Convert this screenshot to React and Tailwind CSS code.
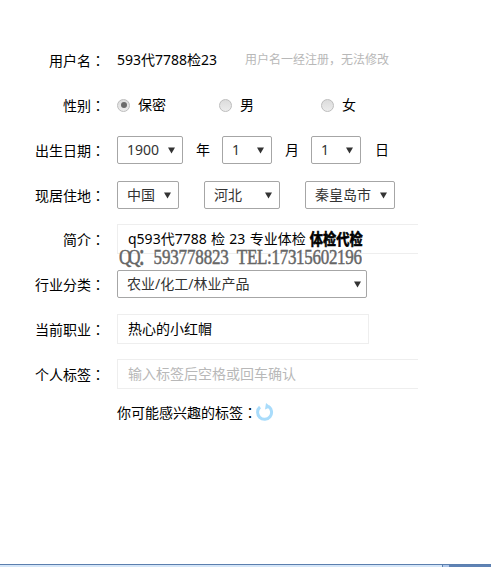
const sans = "font-['Noto_Sans','Noto_Sans_CJK_SC','Liberation_Sans',sans-serif]";

function Label({ children }) {
  return (
    <div className="w-[105px] shrink-0 text-right text-[14px] leading-[20px] text-black">
      {children}
      <span className="font-['Noto_Sans_CJK_TC',sans-serif]">：</span>
    </div>
  );
}

function Arrow({ className = "" }) {
  return (
    <svg width="7" height="7" viewBox="0 0 7 7" className={`absolute top-[10px] ${className}`}>
      <path d="M0 0.5H7L3.5 6.5Z" fill="#333" />
    </svg>
  );
}

function Select({ value, w, arrow = "right-[7px]" }) {
  return (
    <div className={`relative flex h-[28px] shrink-0 items-center self-start rounded-[2px] border border-[#a6a6a6] bg-white pl-[9px] text-[14px] leading-[20px] text-[#333] ${w}`}>
      {value}
      <Arrow className={arrow} />
    </div>
  );
}

function Radio({ checked, label }) {
  return (
    <div className="flex w-[102px] items-center text-[14px] leading-[20px] text-black">
      <span className="flex h-[13px] w-[13px] items-center justify-center rounded-full border border-[#bdbdbd] bg-gradient-to-b from-[#dcdcdc] to-[#ececec]">
        {checked && <span className="h-[6px] w-[6px] rounded-full bg-[#6a6a6a]" />}
      </span>
      <span className="ml-[8px]">{label}</span>
    </div>
  );
}

export default function App() {
  return (
    <div className={`flex h-[567px] w-[491px] flex-col overflow-hidden bg-white ${sans}`}>
      <main className="flex-1 pt-[45px]">
        <div className="flex h-[30px] items-center">
          <Label>用户名</Label>
          <span className="ml-[12px] text-[14px] leading-[20px] text-black">593代7788检23</span>
          <span className="ml-[28px] text-[12px] leading-[20px] text-[#b8b8b8]">用户名一经注册，无法修改</span>
        </div>

        <div className="mt-[15px] flex h-[30px] items-center">
          <Label>性别</Label>
          <div className="ml-[12px] flex">
            <Radio checked label="保密" />
            <Radio label="男" />
            <Radio label="女" />
          </div>
        </div>

        <div className="mt-[15px] flex h-[30px] items-center">
          <Label>出生日期</Label>
          <div className="ml-[12px] flex items-center text-[14px] leading-[20px] text-black">
            <Select value="1900" w="w-[66px]" />
            <span className="ml-[13px] w-[26px]">年</span>
            <Select value="1" w="w-[50px]" />
            <span className="ml-[13px] w-[26px]">月</span>
            <Select value="1" w="w-[50px]" />
            <span className="ml-[14px]">日</span>
          </div>
        </div>

        <div className="mt-[15px] flex h-[30px] items-center">
          <Label>现居住地</Label>
          <div className="ml-[12px] flex items-center gap-[25px]">
            <Select value="中国" w="w-[62px]" />
            <Select value="河北" w="w-[76px]" />
            <Select value="秦皇岛市" w="w-[90px]" />
          </div>
        </div>

        <div className="relative mt-[14px] flex h-[30px] items-center">
          <Label>简介</Label>
          <div className="ml-[12px] flex h-[30px] w-[301px] items-center border border-r-0 border-[#eeeeee] pl-[10px] text-[14px] leading-[20px] text-black">
            <span className="whitespace-nowrap [word-spacing:0.7px]">q593代7788 检 23 专业体检</span>
            <span className="ml-[4px] origin-center scale-y-[1.2] whitespace-nowrap text-[13.25px] font-bold [-webkit-text-stroke:0.5px_black]">体检代检</span>
          </div>
          <div className="absolute left-[119px] top-[25px] origin-center scale-y-[1.25] whitespace-nowrap font-['Liberation_Serif','Noto_Sans_CJK_SC',serif] text-[17px] leading-[18px] tracking-[-0.15px] text-[#666] [-webkit-text-stroke:0.4px_#666] [word-spacing:4px]">
            <span className="tracking-[-3px]">QQ</span>
            <span className="tracking-[-1px]">：</span>593778823 <span className="tracking-[-0.3px]">TEL:17315602196</span>
          </div>
        </div>

        <div className="mt-[16px] flex h-[28px] items-center">
          <Label>行业分类</Label>
          <div className="ml-[12px]">
            <Select value="农业/化工/林业产品" w="w-[250px]" arrow="right-[5px]" />
          </div>
        </div>

        <div className="mt-[16px] flex h-[30px] items-center">
          <Label>当前职业</Label>
          <div className="ml-[12px] flex h-[30px] w-[252px] items-center border border-[#eeeeee] pl-[10px] text-[14px] leading-[20px] text-black">
            热心的小红帽
          </div>
        </div>

        <div className="mt-[15px] flex h-[30px] items-center">
          <Label>个人标签</Label>
          <div className="ml-[12px] flex h-[30px] w-[301px] items-center border border-r-0 border-[#eeeeee] pl-[10px] text-[14px] leading-[20px] text-[#b8b8b8]">
            输入标签后空格或回车确认
          </div>
        </div>

        <div className="mt-[13px] flex h-[20px] items-center pl-[117px] text-[14px] leading-[20px] text-black">
          <span>
            你可能感兴趣的标签<span className="font-['Noto_Sans_CJK_TC',sans-serif]">：</span>
          </span>
          <svg width="18" height="18" viewBox="0 0 18 18" className="ml-[-1px]">
            <path d="M12.5 3.5A7 7 0 1 1 4 4" fill="none" stroke="#a9dcfb" strokeWidth="3" />
            <path d="M10 0L15 4L9 6.5Z" fill="#a9dcfb" />
          </svg>
        </div>
      </main>

      <footer className="flex h-[3px] shrink-0 flex-col">
        <div className="h-px bg-[#5b7fae]" />
        <div className="flex h-[2px]">
          <div className="w-[442px] bg-[#d5e6f8]" />
          <div className="w-px bg-[#5b7fae]" />
          <div className="w-[6px] bg-[#b0c8ea]" />
          <div className="flex-1 bg-[#5f83b5]" />
        </div>
      </footer>
    </div>
  );
}
